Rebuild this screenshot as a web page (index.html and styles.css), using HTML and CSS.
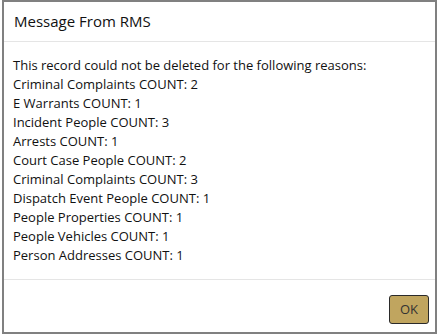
FILE: index.html
```html
<!DOCTYPE html>
<html lang="en">
<head>
    <meta charset="UTF-8">
    <title>Message From RMS</title>
    <link rel="stylesheet" href="styles.css">
</head>
<body>
    <div class="modal">
        <div class="modal-header">
            <h4 class="modal-title">Message From RMS</h4>
        </div>
        <div class="modal-body">
            <div>This record could not be deleted for the following reasons:</div>
            <div>Criminal Complaints COUNT: 2</div>
            <div>E Warrants COUNT: 1</div>
            <div>Incident People COUNT: 3</div>
            <div>Arrests COUNT: 1</div>
            <div>Court Case People COUNT: 2</div>
            <div>Criminal Complaints COUNT: 3</div>
            <div>Dispatch Event People COUNT: 1</div>
            <div>People Properties COUNT: 1</div>
            <div>People Vehicles COUNT: 1</div>
            <div>Person Addresses COUNT: 1</div>
        </div>
        <div class="modal-footer">
            <button class="button">OK</button>
        </div>
    </div>
</body>
</html>
```

FILE: styles.css
```css
html, body {
    margin: 0;
    height: 100%;
    background: #fff;
}
body {
    font-family: 'Open Sans', sans-serif;
    color: #111;
}
.modal {
    box-sizing: border-box;
    height: 334px;
    margin-left: 2px;
    border: 2px solid #808080;
    display: flex;
    flex-direction: column;
}
.modal-header {
    height: 39px;
    padding: 0 10px;
    display: flex;
    align-items: center;
    border-bottom: 1px solid #e5e5e5;
}
.modal-title {
    margin: 0;
    font-size: 15px;
    font-weight: 400;
}
.modal-body {
    flex: 1;
    padding: 14px 9px;
    font-size: 13px;
    line-height: 19px;
}
.modal-footer {
    border-top: 1px solid #e5e5e5;
    padding: 15px 6px 0 0;
    height: 38px;
    display: flex;
    justify-content: flex-end;
    align-items: flex-start;
}
.button {
    width: 40px;
    height: 29px;
    padding: 0;
    font-family: inherit;
    font-size: 13px;
    color: #333;
    background: #c0a55f;
    border: 1px solid #2a2a2a;
    border-radius: 3px;
}
```
